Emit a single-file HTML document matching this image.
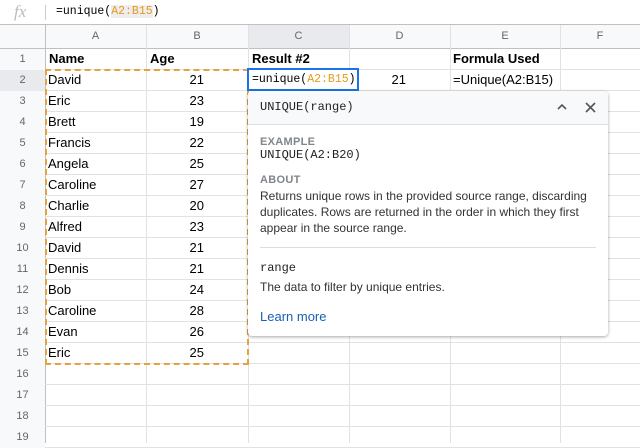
<!DOCTYPE html><html><head><style>
body{margin:0;width:640px;height:443px;overflow:hidden;background:#fff;font-family:"Liberation Sans",Arial,sans-serif;position:relative}
.a{position:absolute}
.fb{left:0;top:0;width:640px;height:24px;border-bottom:1px solid #c0c0c0;background:#fff}
.vl{position:absolute;width:1px;background:#e2e2e2}
.hl{position:absolute;height:1px;background:#e2e2e2;left:0;width:640px}
.ch{top:25px;height:23px;background:#f8f9fa;font-size:11px;color:#666;text-align:center;line-height:23px}
.rh{left:0;width:45px;height:21px;background:#f8f9fa;font-size:11px;color:#666;text-align:center;line-height:21px}
.c{font-size:13px;height:21px;line-height:21px;color:#000;white-space:nowrap}
.mono{font-family:"Liberation Mono",monospace}
</style></head><body>
<div class="a fb"></div>
<div class="a" style="left:14px;top:2px;font:italic 17px 'Liberation Serif',serif;color:#bbb">fx</div>
<div class="a" style="left:45px;top:5px;width:1px;height:15px;background:#ccc"></div>
<div class="a mono" style="left:56px;top:5px;font-size:11.5px;color:#000">=unique(<span style="color:#e69a1f;background:#eee">A2:B15</span>)</div>
<div class="a" style="left:0;top:25px;width:640px;height:23px;background:#f8f9fa"></div>
<div class="a" style="left:0;top:48px;width:45px;height:395px;background:#f8f9fa"></div>
<div class="a ch" style="left:45px;width:101px">A</div>
<div class="a ch" style="left:146px;width:102px">B</div>
<div class="a ch" style="left:248px;width:101px;background:#e8eaed">C</div>
<div class="a ch" style="left:349px;width:101px">D</div>
<div class="a ch" style="left:450px;width:110px">E</div>
<div class="a ch" style="left:560px;width:80px">F</div>
<div class="a" style="left:0;top:48px;width:640px;height:1px;background:#c0c0c0"></div>
<div class="a" style="left:45px;top:25px;width:1px;height:418px;background:#c0c0c0"></div>
<div class="vl" style="left:146px;top:25px;height:418px"></div>
<div class="vl" style="left:248px;top:25px;height:418px"></div>
<div class="vl" style="left:349px;top:25px;height:418px"></div>
<div class="vl" style="left:450px;top:25px;height:418px"></div>
<div class="vl" style="left:560px;top:25px;height:418px"></div>
<div id="rows"></div>
<script>
var names=["David","Eric","Brett","Francis","Angela","Caroline","Charlie","Alfred","David","Dennis","Bob","Caroline","Evan","Eric"];
var ages=[21,23,19,22,25,27,20,23,21,21,24,28,26,25];
var h="";
for(var i=0;i<19;i++){var t=48+i*21;
h+='<div class="hl" style="top:'+(t+21)+'px"></div>';
h+='<div class="a rh" style="top:'+(t+1)+'px'+(i==1?';background:#e8eaed':'')+'">'+(i+1)+'</div>';
if(i>=1&&i<=14){h+='<div class="a c" style="left:48px;top:'+t+'px">'+names[i-1]+'</div>';
h+='<div class="a c" style="left:146px;width:58px;text-align:right;top:'+t+'px">'+ages[i-1]+'</div>';}}
document.getElementById("rows").innerHTML=h;
</script>
<div class="a c" style="left:49px;top:48px;font-weight:bold">Name</div>
<div class="a c" style="left:150px;top:48px;font-weight:bold">Age</div>
<div class="a c" style="left:252px;top:48px;font-weight:bold">Result #2</div>
<div class="a c" style="left:453px;top:48px;font-weight:bold">Formula Used</div>
<div class="a c" style="left:349px;width:57px;text-align:right;top:69px">21</div>
<div class="a c" style="left:453px;top:69px">=Unique(A2:B15)</div>
<div class="a" style="left:45px;top:69px;width:200px;height:292px;border:2px dashed #e6a23c"></div>
<div class="a mono" style="left:247px;top:68px;width:105px;height:19px;border:2px solid #1a73e8;background:#fff;font-size:11.5px;line-height:19px;padding-left:3px;box-sizing:content-box;white-space:nowrap">=unique(<span style="color:#e69a1f">A2:B15</span>)</div>
<div class="a" style="left:248px;top:91px;width:360px;height:245px;background:#fff;border-radius:4px;box-shadow:0 1px 3px rgba(0,0,0,.35);overflow:hidden">
<div style="height:33px;background:#f8f9fa;border-bottom:1px solid #e0e0e0;position:relative">
<div class="mono" style="position:absolute;left:12px;top:9px;font-size:12px;color:#222">UNIQUE(range)</div>
<svg style="position:absolute;left:309px;top:12px" width="10" height="8"><path d="M1 6L5 2L9 6" stroke="#555" stroke-width="1.6" fill="none"/></svg>
<svg style="position:absolute;left:337px;top:11px" width="11" height="11"><path d="M1 1L10 10M10 1L1 10" stroke="#555" stroke-width="1.6"/></svg>
</div>
<div style="position:absolute;left:12px;top:45px;font-size:11px;font-weight:bold;color:#80868b;letter-spacing:.3px">EXAMPLE</div>
<div class="mono" style="position:absolute;left:12px;top:57px;font-size:12px;color:#222">UNIQUE(A2:B20)</div>
<div style="position:absolute;left:12px;top:83px;font-size:11px;font-weight:bold;color:#80868b;letter-spacing:.3px">ABOUT</div>
<div style="position:absolute;left:12px;top:97px;width:345px;font-size:12px;line-height:16px;color:#333">Returns unique rows in the provided source range, discarding duplicates. Rows are returned in the order in which they first appear in the source range.</div>
<div style="position:absolute;left:12px;top:156px;width:336px;height:1px;background:#ddd"></div>
<div class="mono" style="position:absolute;left:12px;top:170px;font-size:12px;color:#222">range</div>
<div style="position:absolute;left:12px;top:189px;font-size:12px;color:#333">The data to filter by unique entries.</div>
<div style="position:absolute;left:12px;top:218px;font-size:13px;color:#1a5fb4">Learn more</div>
</div>
</body></html>
